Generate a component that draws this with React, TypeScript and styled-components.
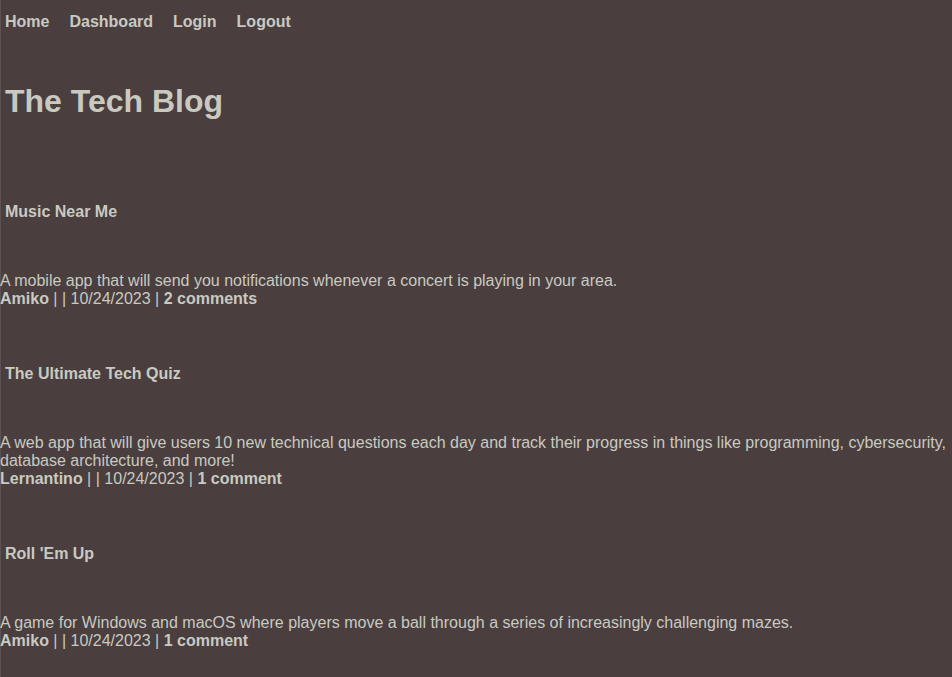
import React from "react";
import styled, { createGlobalStyle } from "styled-components";

const Global = createGlobalStyle`
  html, body {
    margin: 0;
    padding: 0;
    background: #4a3e3e;
  }
  body {
    font-family: "Liberation Sans", Arial, Helvetica, sans-serif;
    color: #c8cac2;
    font-size: 16px;
    line-height: 18px;
    box-shadow: inset 1px 0 0 #5c5252;
    min-height: 100vh;
  }
`;

const Page = styled.div`
  display: flex;
  flex-direction: column;
`;

const Nav = styled.nav`
  display: flex;
  gap: 20px;
  padding: 13px 0 0 5px;
`;

const NavLink = styled.a`
  color: #c8cac2;
  font-weight: 700;
  text-decoration: none;
  line-height: 18px;
`;

const Title = styled.h1`
  margin: 52px 0 0 5px;
  font-size: 32px;
  line-height: 37px;
  font-weight: 700;
`;

const PostList = styled.main`
  display: flex;
  flex-direction: column;
  gap: 57px;
  margin-top: 83px;
`;

const Post = styled.article`
  display: flex;
  flex-direction: column;
`;

const PostTitle = styled.h2`
  margin: 0 0 51px 5px;
  font-size: 16px;
  line-height: 18px;
  font-weight: 700;
`;

const Desc = styled.p`
  margin: 0;
  line-height: 18px;
`;

const Meta = styled.p`
  margin: 0;
  line-height: 18px;
`;

const Strong = styled.span`
  font-weight: 700;
`;

const posts = [
  {
    title: "Music Near Me",
    desc: "A mobile app that will send you notifications whenever a concert is playing in your area.",
    author: "Amiko",
    date: "10/24/2023",
    comments: "2 comments",
  },
  {
    title: "The Ultimate Tech Quiz",
    desc: "A web app that will give users 10 new technical questions each day and track their progress in things like programming, cybersecurity, database architecture, and more!",
    author: "Lernantino",
    date: "10/24/2023",
    comments: "1 comment",
  },
  {
    title: "Roll 'Em Up",
    desc: "A game for Windows and macOS where players move a ball through a series of increasingly challenging mazes.",
    author: "Amiko",
    date: "10/24/2023",
    comments: "1 comment",
  },
];

export default function App() {
  return (
    <>
      <Global />
      <Page>
        <Nav>
          <NavLink href="#">Home</NavLink>
          <NavLink href="#">Dashboard</NavLink>
          <NavLink href="#">Login</NavLink>
          <NavLink href="#">Logout</NavLink>
        </Nav>
        <Title>The Tech Blog</Title>
        <PostList>
          {posts.map((p) => (
            <Post key={p.title}>
              <PostTitle>{p.title}</PostTitle>
              <Desc>{p.desc}</Desc>
              <Meta>
                <Strong>{p.author}</Strong> | | {p.date} | <Strong>{p.comments}</Strong>
              </Meta>
            </Post>
          ))}
        </PostList>
      </Page>
    </>
  );
}
